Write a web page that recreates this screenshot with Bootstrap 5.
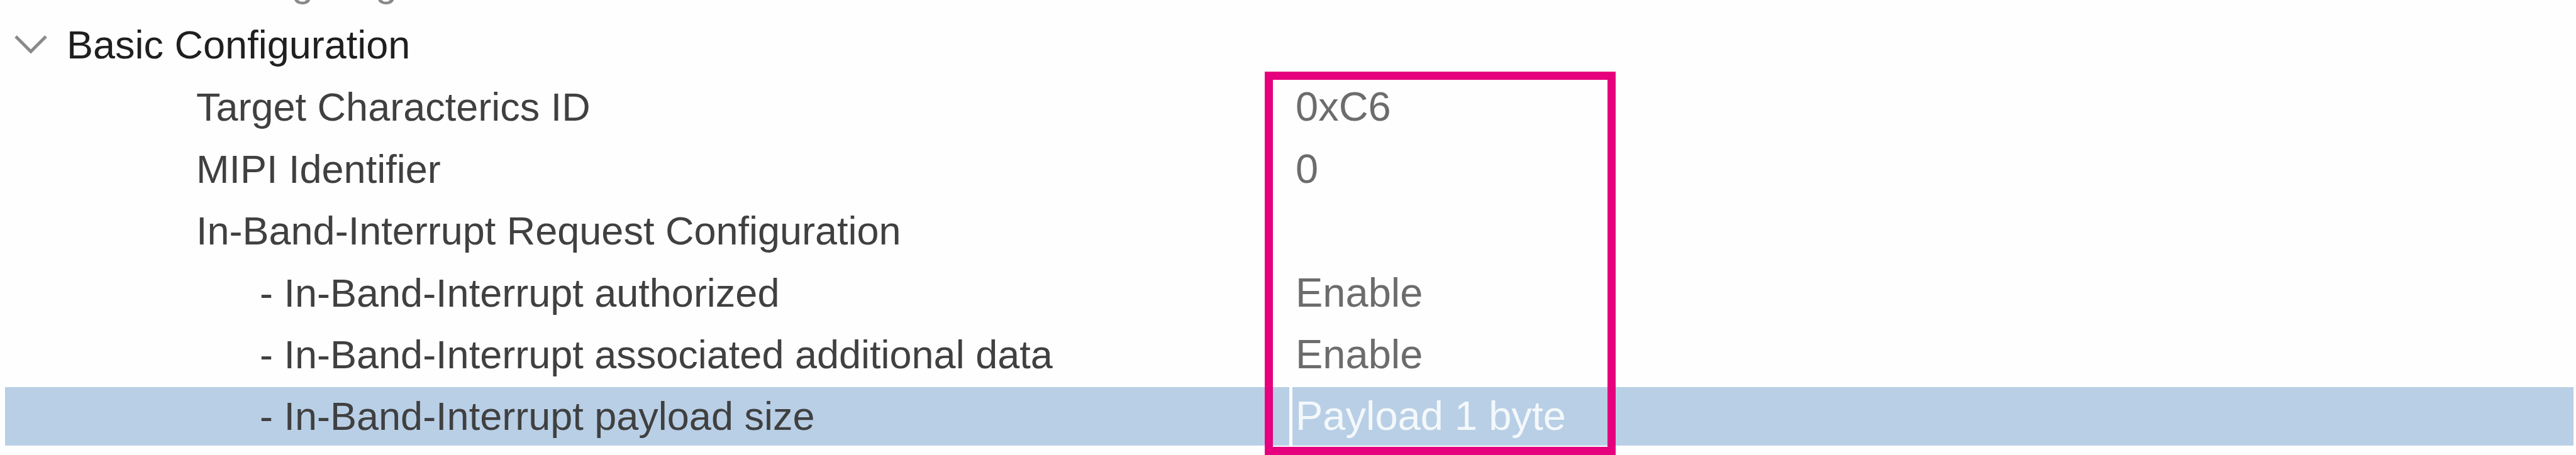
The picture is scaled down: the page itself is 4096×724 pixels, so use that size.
<!DOCTYPE html>
<html lang="en">
<head>
<meta charset="utf-8">
<meta name="viewport" content="width=device-width, initial-scale=1">
<title>Basic Configuration</title>
<link href="https://cdn.jsdelivr.net/npm/bootstrap@5.3.0/dist/css/bootstrap.min.css" rel="stylesheet">
<script src="https://cdn.jsdelivr.net/npm/bootstrap@5.3.0/dist/js/bootstrap.bundle.min.js"></script>
<style>
  body { font-family: "Liberation Sans", Arial, sans-serif; font-size: 63px; line-height: 90px; color: #404040; background: #fefefe; }
  .tree-view { height: 100vh; padding: 0 4px 10px 8px; }
  .tree-grid { height: calc(100vh + 70px); flex: none; table-layout: fixed; border-collapse: separate; border-spacing: 0 5px; }
  .tree-grid th, .tree-grid td { padding: 0; font-weight: 400; text-align: left; vertical-align: middle; white-space: nowrap; }
  .tree-grid td { border-left: 5px solid #fefefe; padding-left: 5px; font-size: 65px; color: #6c6c6c; }
  .tree-grid .level-1 { padding-left: 304px; }
  .tree-grid .level-2 { padding-left: 405px; }
  .tree-grid .muted-row th { color: #8a8a8a; }
  .tree-grid .picked-row > * { background: #b8cfe6; }
  .tree-grid .picked-row td { color: #f4f8fb; }
  .toggle-btn { color: #1f1f1f; padding-left: 15px; gap: 31px; }
  .focus-frame { top: 114px; bottom: 0; left: calc(50% - 37px); width: 558px; border: 13px solid #e6007e; }
</style>
</head>
<body>
<main class="tree-view position-relative overflow-hidden d-flex flex-column justify-content-end">
  <table class="tree-grid w-100">
    <colgroup><col class="w-50"><col class="w-50"></colgroup>
    <tbody>
      <tr class="muted-row"><th scope="row" class="level-1">Timing Registers</th><td></td></tr>
      <tr>
        <th scope="row">
          <button type="button" class="toggle-btn d-flex align-items-center border-0 bg-transparent" aria-expanded="true">
            <svg width="52" height="32" viewBox="0 0 52 32" fill="none" stroke="#8a8a8a" stroke-width="5" aria-hidden="true"><path d="M2 3 L26 27 L50 3"/></svg>
            <span>Basic Configuration</span>
          </button>
        </th>
        <td></td>
      </tr>
      <tr><th scope="row" class="level-1">Target Characterics ID</th><td>0xC6</td></tr>
      <tr><th scope="row" class="level-1">MIPI Identifier</th><td>0</td></tr>
      <tr><th scope="row" class="level-1">In-Band-Interrupt Request Configuration</th><td></td></tr>
      <tr><th scope="row" class="level-2">- In-Band-Interrupt authorized</th><td>Enable</td></tr>
      <tr><th scope="row" class="level-2">- In-Band-Interrupt associated additional data</th><td>Enable</td></tr>
      <tr class="picked-row"><th scope="row" class="level-2">- In-Band-Interrupt payload size</th><td>Payload 1 byte</td></tr>
    </tbody>
  </table>
  <div class="focus-frame position-absolute"></div>
</main>
</body>
</html>
